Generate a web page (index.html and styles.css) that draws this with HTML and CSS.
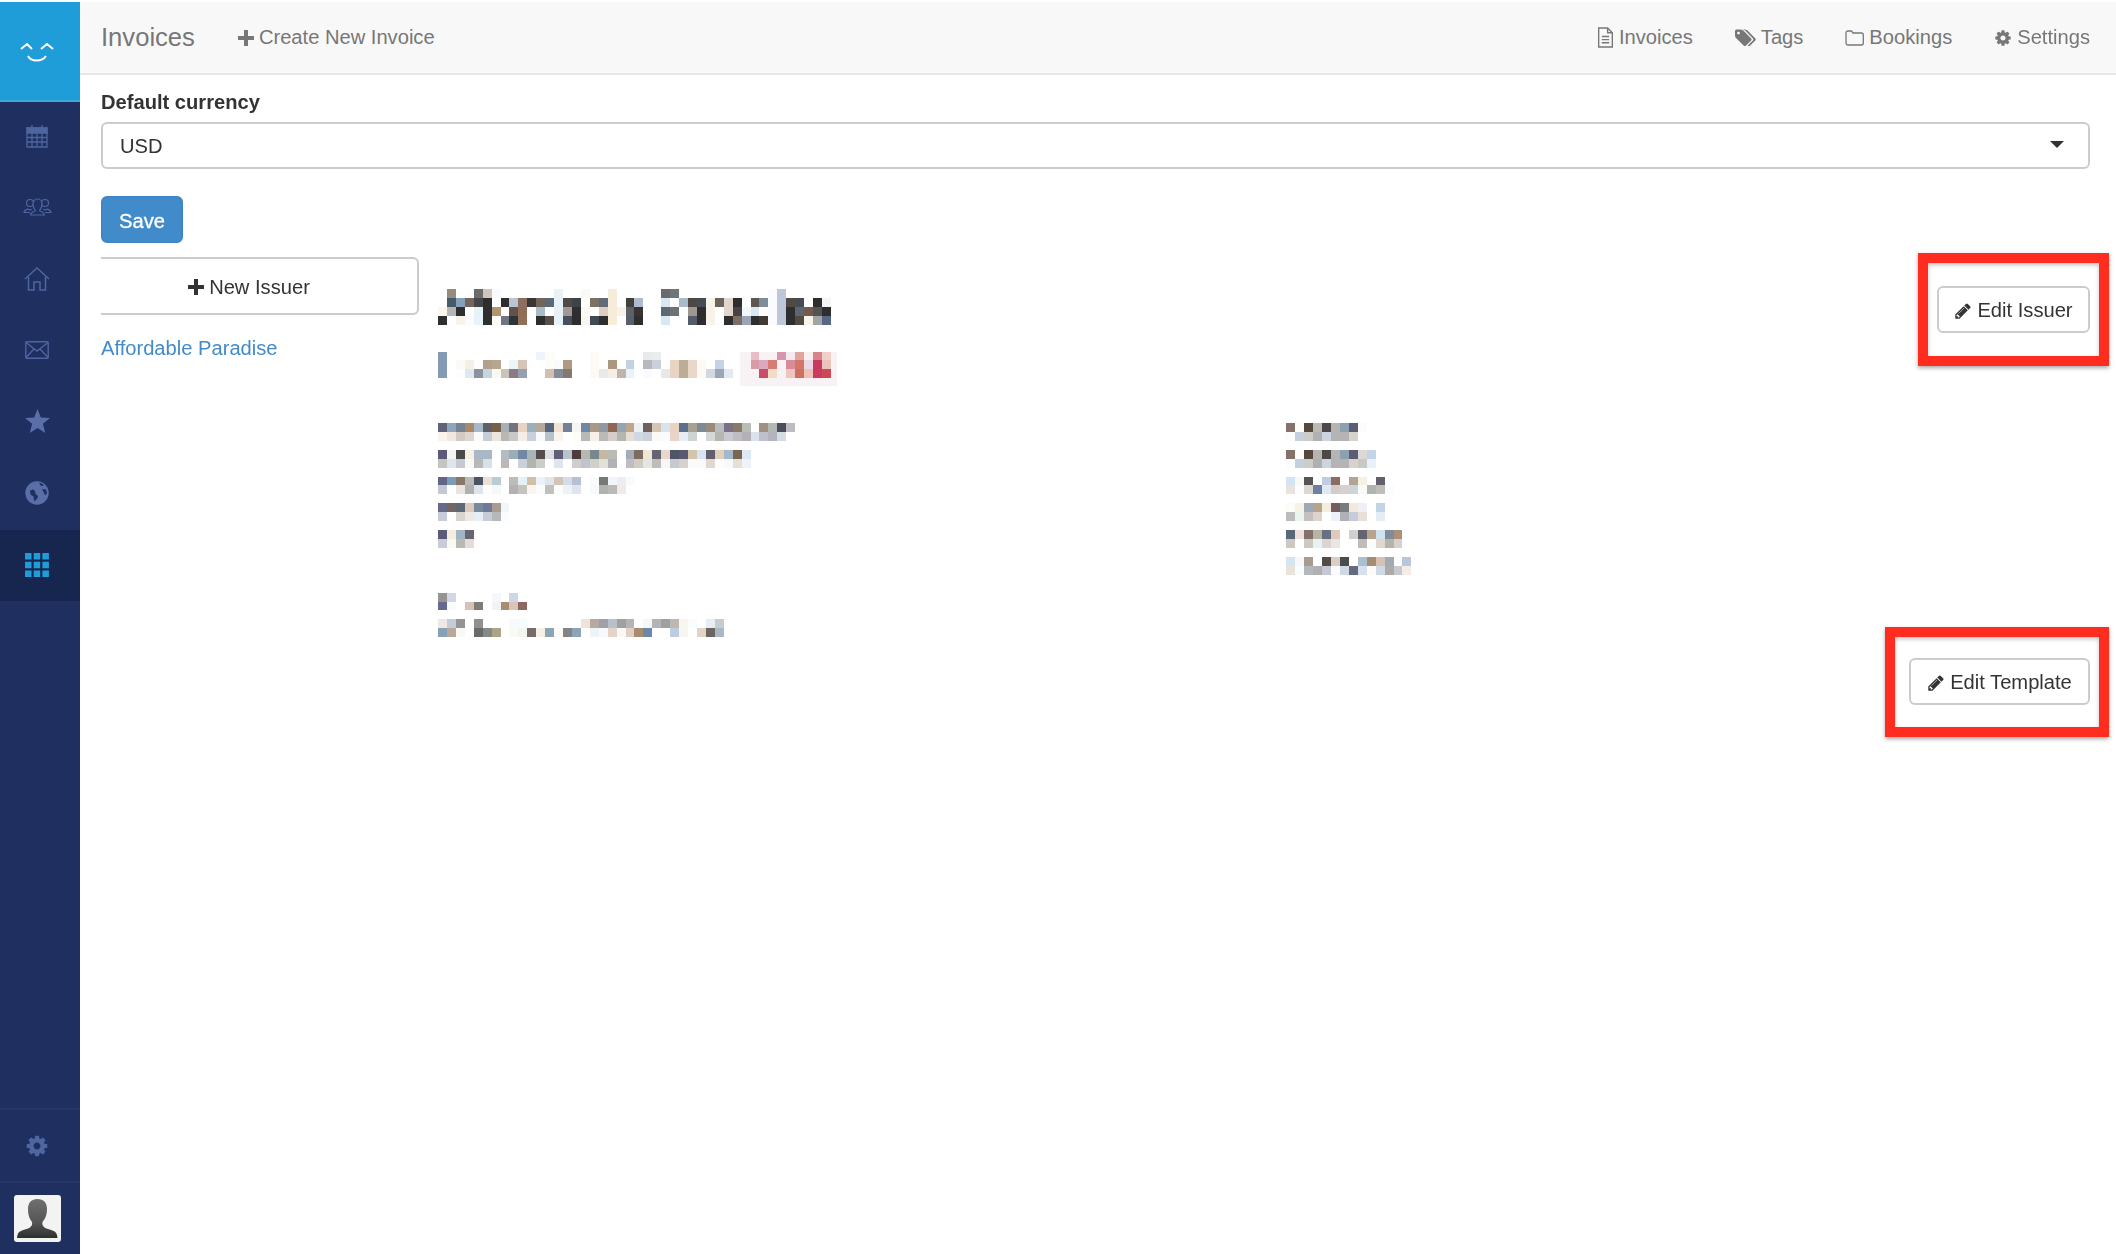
FILE: index.html
```html
<!DOCTYPE html>
<html lang="en">
<head>
<meta charset="utf-8">
<title>Invoices</title>
<link rel="stylesheet" href="styles.css">
</head>
<body>
<div class="app">
  <aside class="sidebar">
    <a class="logo">
      <svg width="34" height="22" viewBox="0 0 34 22" fill="none" stroke="#fff" stroke-width="2"><path d="M1 7l6-5 5 5M21 7l6-5 6 5"/><path d="M8 14c3 6 14 6 18 0"/></svg>
    </a>
    <nav class="side-nav">
      <a class="side-item">
        <svg width="22" height="24" viewBox="0 0 22 24" fill="none" stroke="#4f65a0" stroke-width="1.3"><path d="M1 4h20v19H1z"/><path d="M1 4h20v5H1z" fill="#4f65a0"/><path d="M1 13.5h20M1 18h20M6 9v14M11 9v14M16 9v14M6 1v4M16 1v4"/></svg>
      </a>
      <a class="side-item">
        <svg width="29" height="18" viewBox="0 0 29 18" fill="none" stroke="#4f65a0" stroke-width="1.2"><path d="M9 11.5c-2 .6-4-.2-4.500-.5-1.500 1-3.500 1.500-3.500 3.500h6"/><circle cx="7" cy="5" r="3.500"/><path d="M20 11.500c2 .6 4-.2 4.500-.5 1.500 1 3.500 1.500 3.500 3.500h-6"/><circle cx="22" cy="5" r="3.500"/><path d="M7.500 17c0-3 4-3 5-4.500-2-2.500-2.500-4-2.500-6.500 0-3 2-5 4.500-5S19 3 19 6c0 2.500-.5 4-2.500 6.500 1 1.500 5 1.500 5 4.500z" fill="#1e2f60"/></svg>
      </a>
      <a class="side-item">
        <svg width="26" height="24" viewBox="0 0 26 24" fill="none" stroke="#4f65a0" stroke-width="1.5"><path d="M1 12L13 1l12 11"/><path d="M4.500 10v13H10v-8h6v8h5.500V10"/></svg>
      </a>
      <a class="side-item">
        <svg width="24" height="18" viewBox="0 0 24 18" fill="none" stroke="#4f65a0" stroke-width="1.4"><rect x=".8" y=".8" width="22.400" height="16.400" rx="1"/><path d="M1 1.500l11 8.500 11-8.500M1 16.500l8-8.500M23 16.500L15 8"/></svg>
      </a>
      <a class="side-item">
        <svg width="25" height="24" viewBox="0 0 25 24"><path fill="#5a6fa8" d="M12.500 0l3.300 8.400 9.200.6-7.100 5.800 2.300 9.200-7.700-5-7.700 5 2.300-9.200L0 9l9.200-.6z"/></svg>
      </a>
      <a class="side-item">
        <svg width="24" height="24" viewBox="0 0 24 24"><circle cx="12" cy="12" r="11.700" fill="#5a6fa8"/><path fill="#1e2f60" d="M5 9.500l3-1 2 1.500.5 3 2.500 2-.5 2-2.500 3-1-.5-.5-4-3-2zM14 1.800l3 .7 2 2-3 .5zM17 8l4 .5 1 3.500-1.500 2.500L19 12z"/></svg>
      </a>
      <a class="side-item active">
        <svg width="24" height="24" viewBox="0 0 24 24" fill="#1f9dd9"><path d="M0 0h6.500v6.500H0zM8.700 0h6.500v6.500H8.700zM17.400 0h6.500v6.500h-6.500zM0 8.700h6.500v6.500H0zM8.700 8.700h6.500v6.500H8.700zM17.400 8.700h6.500v6.500h-6.500zM0 17.400h6.500v6.500H0zM8.700 17.400h6.500v6.500H8.700zM17.400 17.400h6.500v6.500h-6.500z"/></svg>
      </a>
    </nav>
    <div class="side-foot">
      <a class="side-gear">
        <svg width="24" height="24" viewBox="0 0 1792 1792"><path fill="#4f65a0" d="M1152 896q0-106-75-181t-181-75-181 75-75 181 75 181 181 75 181-75 75-181zm512-109v222q0 12-8 23t-20 13l-185 28q-19 54-39 91 35 50 107 138 10 12 10 25t-9 23q-27 37-99 108t-94 71q-12 0-26-9l-138-108q-44 23-91 38-16 136-29 186-7 28-36 28h-222q-14 0-24.500-8.500t-11.500-21.500l-28-184q-49-16-90-37l-141 107q-10 9-25 9-14 0-25-11-126-114-165-168-7-10-7-23 0-12 8-23 15-21 51-66.500t54-70.500q-27-50-41-99l-183-27q-13-2-21-12.500t-8-23.500v-222q0-12 8-23t19-13l186-28q14-46 39-92-40-57-107-138-10-12-10-24 0-10 9-23 26-36 98.500-107.500t94.500-71.500q13 0 26 10l138 107q44-23 91-38 16-136 29-186 7-28 36-28h222q14 0 24.500 8.500t11.500 21.500l28 184q49 16 90 37l142-107q9-9 24-9 13 0 25 10 129 119 165 170 7 8 7 22 0 12-8 23-15 21-51 66.500t-54 70.500q26 50 41 98l183 28q13 2 21 12.500t8 23.500z"/></svg>
      </a>
      <div class="side-user">
        <svg class="avatar" width="47" height="47" viewBox="0 0 47 47">
          <defs><linearGradient id="sil" x1="0" y1="0" x2="0" y2="1"><stop offset="0" stop-color="#707070"/><stop offset=".6" stop-color="#555"/><stop offset="1" stop-color="#2f2f2f"/></linearGradient></defs>
          <rect width="47" height="47" rx="3" fill="#f3f3f3"/>
          <path fill="url(#sil)" d="M23.500 4c6 0 9.500 3.500 9.500 10 0 6-2 10-4.500 13-.5 3 .5 5 4 6.500 4 1.500 9.500 2 10.500 6.500l.5 3H3l.5-3c1-4.500 6.500-5 10.500-6.500 3.500-1.500 4.500-3.500 4-6.500C15.500 24 14 20 14 14c0-6.500 3.500-10 9.500-10z"/>
        </svg>
      </div>
    </div>
  </aside>

  <main class="main">
    <header class="topbar">
      <span class="brand">Invoices</span>
      <a class="nav-link create">
        <svg class="ic" width="16" height="16" viewBox="0 0 16 16" fill="#777"><path d="M6 0h4v6h6v4h-6v6H6v-6H0V6h6z"/></svg>
        Create New Invoice
      </a>
      <div class="topbar-right">
        <a class="nav-link">
          <svg class="ic" width="17" height="21" viewBox="0 0 15 20" fill="none" stroke="#777" stroke-width="1.300"><path d="M1 1h8.500L14 5.500V19H1z"/><path d="M9.500 1v4.500H14M4 9h7M4 12h7M4 15h7"/></svg>
          Invoices
        </a>
        <a class="nav-link">
          <svg class="ic" width="21" height="20" viewBox="0 0 1920 1792"><path fill="#777" d="M448 448q0-53-37.500-90.500t-90.500-37.500-90.500 37.500-37.500 90.500 37.500 90.500 90.500 37.500 90.500-37.500 37.500-90.500zm1067 576q0 53-37 90l-491 492q-39 37-91 37-53 0-90-37l-715-716q-38-37-64.500-101t-26.500-117v-416q0-52 38-90t90-38h416q53 0 117 26.500t102 64.500l715 714q37 39 37 91zm384 0q0 53-37 90l-491 492q-39 37-91 37-36 0-59-14t-53-45l470-470q37-37 37-90 0-52-37-91l-715-714q-38-38-102-64.500t-117-26.500h224q53 0 117 26.500t102 64.500l715 714q37 39 37 91z"/></svg>
          Tags
        </a>
        <a class="nav-link">
          <svg class="ic" width="19" height="16" viewBox="0 0 19 16" fill="none" stroke="#777" stroke-width="1.300"><path d="M1 3c0-1 .6-2 2-2h3.500L8 3h8.500c1 0 1.800.7 1.800 2v8c0 1.300-.8 2-1.800 2H3c-1.400 0-2-1-2-2z"/></svg>
          Bookings
        </a>
        <a class="nav-link">
          <svg class="ic" width="18" height="18" viewBox="0 0 1792 1792"><path fill="#777" d="M1152 896q0-106-75-181t-181-75-181 75-75 181 75 181 181 75 181-75 75-181zm512-109v222q0 12-8 23t-20 13l-185 28q-19 54-39 91 35 50 107 138 10 12 10 25t-9 23q-27 37-99 108t-94 71q-12 0-26-9l-138-108q-44 23-91 38-16 136-29 186-7 28-36 28h-222q-14 0-24.500-8.500t-11.500-21.500l-28-184q-49-16-90-37l-141 107q-10 9-25 9-14 0-25-11-126-114-165-168-7-10-7-23 0-12 8-23 15-21 51-66.500t54-70.500q-27-50-41-99l-183-27q-13-2-21-12.500t-8-23.500v-222q0-12 8-23t19-13l186-28q14-46 39-92-40-57-107-138-10-12-10-24 0-10 9-23 26-36 98.500-107.500t94.500-71.500q13 0 26 10l138 107q44-23 91-38 16-136 29-186 7-28 36-28h222q14 0 24.500 8.500t11.500 21.500l28 184q49 16 90 37l142-107q9-9 24-9 13 0 25 10 129 119 165 170 7 8 7 22 0 12-8 23-15 21-51 66.500t-54 70.500q26 50 41 98l183 28q13 2 21 12.500t8 23.500z"/></svg>
          Settings
        </a>
      </div>
    </header>

    <section class="content">
      <label class="field-label">Default currency</label>
      <div class="select"><span>USD</span><i class="caret"></i></div>
      <button class="btn-save">Save</button>

      <div class="issuers">
        <div class="issuer-list">
          <a class="btn-new">
            <svg class="ic" width="16" height="16" viewBox="0 0 16 16" fill="#333"><path d="M6 0h4v6h6v4h-6v6H6v-6H0V6h6z"/></svg>
            New Issuer
          </a>
          <a class="issuer-link">Affordable Paradise</a>
        </div>
        <div class="issuer-pane">
          <div class="issuer-head">
            <svg class="mosaic" viewBox="0 0 109 39" role="img" aria-label="Obscured issuer details">
              <g transform="translate(0,0)"><rect x="1" fill="#978a7f"/><rect x="4" fill="#6b6b6b"/><rect x="5" fill="#cfc5bc"/><rect x="6" fill="#f8fafd"/><rect x="13" fill="#e6f2f8"/><rect x="16" fill="#fcf8f4"/><rect x="19" fill="#f7ebd9"/><rect x="25" fill="#6b6b6b"/><rect x="26" fill="#707676"/><rect x="37" fill="#f9fbfe"/><rect x="38" fill="#bcc7d9"/></g>
              <g transform="translate(0,1)"><rect x="1" fill="#465a6a"/><rect x="2" fill="#85a0bb"/><rect x="3" fill="#76655c"/><rect x="4" fill="#454648"/><rect x="5" fill="#2e2e2e"/><rect x="7" fill="#2e2e2e"/><rect x="8" fill="#b9c5d2"/><rect x="9" fill="#8e6e60"/><rect x="10" fill="#3a3835"/><rect x="11" fill="#74655b"/><rect x="12" fill="#5a6a78"/><rect x="13" fill="#e6f2f8"/><rect x="14" fill="#4e4a46"/><rect x="15" fill="#3e4349"/><rect x="17" fill="#7d7164"/><rect x="18" fill="#5f6b78"/><rect x="19" fill="#f7ebd9"/><rect x="21" fill="#433f3b"/><rect x="22" fill="#b0bccd"/><rect x="25" fill="#d8e8f2"/><rect x="27" fill="#a9bbc8"/><rect x="28" fill="#4d4845"/><rect x="29" fill="#454c54"/><rect x="30" fill="#f7f3e8"/><rect x="31" fill="#6e635a"/><rect x="32" fill="#e2d6cc"/><rect x="33" fill="#2e2e2e"/><rect x="35" fill="#5f5650"/><rect x="36" fill="#7f8c9a"/><rect x="37" fill="#f9fbfe"/><rect x="38" fill="#bcc7d9"/><rect x="39" fill="#4f4a47"/><rect x="40" fill="#454b54"/><rect x="42" fill="#2e2e2e"/><rect x="43" fill="#f2f6f9"/></g>
              <g transform="translate(0,2)"><rect x="0" fill="#fcf7ed"/><rect x="1" fill="#b5b5b8"/><rect x="2" fill="#2e2e2e"/><rect x="4" fill="#e6f3f8"/><rect x="5" fill="#2e2e2e"/><rect x="6" fill="#ad9671"/><rect x="8" fill="#62524a"/><rect x="9" fill="#8f6e58"/><rect x="11" fill="#a8bdc9"/><rect x="13" fill="#e6f2f8"/><rect x="14" fill="#a29a90"/><rect x="15" fill="#2f2f2f"/><rect x="16" fill="#fcf8f4"/><rect x="18" fill="#e0cdbe"/><rect x="19" fill="#f7ebd9"/><rect x="20" fill="#f9f2e6"/><rect x="21" fill="#5c6168"/><rect x="22" fill="#383434"/><rect x="25" fill="#5e6870"/><rect x="26" fill="#6e7272"/><rect x="28" fill="#9e9890"/><rect x="29" fill="#2e2e2e"/><rect x="30" fill="#f7f3e8"/><rect x="32" fill="#e2d6cc"/><rect x="33" fill="#464442"/><rect x="34" fill="#f3f6fa"/><rect x="35" fill="#d8e8f2"/><rect x="37" fill="#f9fbfe"/><rect x="38" fill="#bcc7d9"/><rect x="39" fill="#2e2e2e"/><rect x="40" fill="#5f6570"/><rect x="41" fill="#725a4e"/><rect x="42" fill="#53534f"/><rect x="43" fill="#2e2e2e"/></g>
              <g transform="translate(0,3)"><rect x="0" fill="#2e2e2e"/><rect x="2" fill="#f7f3e8"/><rect x="3" fill="#fbfcfe"/><rect x="4" fill="#e6f3f8"/><rect x="5" fill="#2e2e2e"/><rect x="6" fill="#fdfcf8"/><rect x="7" fill="#6f7683"/><rect x="8" fill="#303236"/><rect x="9" fill="#906e58"/><rect x="11" fill="#2e2e2e"/><rect x="12" fill="#584f47"/><rect x="13" fill="#e6f2f8"/><rect x="14" fill="#46505c"/><rect x="15" fill="#2e2e2e"/><rect x="16" fill="#f9f6f2"/><rect x="17" fill="#434952"/><rect x="18" fill="#2e2e2e"/><rect x="19" fill="#f7ebd9"/><rect x="21" fill="#55606a"/><rect x="22" fill="#2e2e2e"/><rect x="25" fill="#d8e8f2"/><rect x="28" fill="#535c68"/><rect x="29" fill="#2e2e2e"/><rect x="30" fill="#f7f3e8"/><rect x="32" fill="#2e2e2e"/><rect x="33" fill="#7b6e66"/><rect x="34" fill="#9ba5b5"/><rect x="35" fill="#2e2e2e"/><rect x="36" fill="#413a33"/><rect x="37" fill="#f9fbfe"/><rect x="38" fill="#bcc7d9"/><rect x="39" fill="#2e2e2e"/><rect x="40" fill="#4f4a42"/><rect x="41" fill="#f9f4e9"/><rect x="42" fill="#a0a4a6"/><rect x="43" fill="#566684"/></g>

              <rect class="pink-bg" x="33.800" y="7" fill="#f8f2f5"/>
              <g transform="translate(0,7)"><rect x="0" fill="#8499b3"/><rect x="11" fill="#eef4f9"/><rect x="12" fill="#fdfcf8"/><rect x="17" fill="#fdf9f5"/><rect x="23" fill="#e8e9ea"/><rect x="24" fill="#ececee"/><rect x="35" fill="#e8bec6"/><rect x="38" fill="#d595ae"/><rect x="39" fill="#f3e9f1"/><rect x="40" fill="#e2a39c"/><rect x="41" fill="#f9eff0"/><rect x="42" fill="#d5848f"/><rect x="43" fill="#efcfc8"/></g>
              <g transform="translate(0,8)"><rect x="0" fill="#8499b3"/><rect x="2" fill="#fafaf6"/><rect x="3" fill="#f6efe5"/><rect x="4" fill="#fdfdfb"/><rect x="5" fill="#b3a08d"/><rect x="6" fill="#b7a58f"/><rect x="8" fill="#edf5f8"/><rect x="9" fill="#d6c4b6"/><rect x="12" fill="#fdfcf8"/><rect x="13" fill="#f8fafb"/><rect x="14" fill="#b09883"/><rect x="17" fill="#fdf9f5"/><rect x="19" fill="#ac9780"/><rect x="21" fill="#c2d2e4"/><rect x="23" fill="#b8b8bc"/><rect x="24" fill="#cacfdc"/><rect x="26" fill="#e9d4c4"/><rect x="27" fill="#bcae96"/><rect x="28" fill="#e9d8c9"/><rect x="29" fill="#fdfaf6"/><rect x="31" fill="#c4d3e6"/><rect x="35" fill="#da9ba8"/><rect x="36" fill="#dba9bd"/><rect x="37" fill="#d87b72"/><rect x="38" fill="#fbf2f6"/><rect x="39" fill="#d98b9a"/><rect x="40" fill="#d37668"/><rect x="41" fill="#ead9e6"/><rect x="42" fill="#c9395f"/><rect x="43" fill="#ecc3b8"/></g>
              <g transform="translate(0,9)"><rect x="0" fill="#8499b3"/><rect x="2" fill="#fdfdfe"/><rect x="3" fill="#dce9f1"/><rect x="4" fill="#8a929c"/><rect x="5" fill="#c4d4e1"/><rect x="6" fill="#faf8f3"/><rect x="7" fill="#c9c4b8"/><rect x="8" fill="#887c82"/><rect x="9" fill="#96a0b4"/><rect x="12" fill="#d2bfae"/><rect x="13" fill="#828c9a"/><rect x="14" fill="#84796f"/><rect x="17" fill="#fdf9f5"/><rect x="18" fill="#e9e9e8"/><rect x="19" fill="#f6eee6"/><rect x="20" fill="#bfb4a9"/><rect x="21" fill="#e8f2f9"/><rect x="23" fill="#f9fbfd"/><rect x="25" fill="#e8e8e8"/><rect x="26" fill="#e9d4c4"/><rect x="27" fill="#bcae96"/><rect x="28" fill="#e9d8c9"/><rect x="29" fill="#fdfaf6"/><rect x="30" fill="#d2d7e0"/><rect x="31" fill="#9aa5b6"/><rect x="32" fill="#e4e9f1"/><rect x="36" fill="#c94d68"/><rect x="37" fill="#f1dcc8"/><rect x="39" fill="#eec5be"/><rect x="40" fill="#cf6f60"/><rect x="41" fill="#eec2b8"/><rect x="42" fill="#cb3b60"/><rect x="43" fill="#cc4a58"/></g>

              <g transform="translate(0,15)"><rect x="0" fill="#60627c"/><rect x="1" fill="#8fa6ba"/><rect x="2" fill="#768491"/><rect x="3" fill="#a98a68"/><rect x="4" fill="#a5b8cc"/><rect x="5" fill="#5f6065"/><rect x="6" fill="#775f4a"/><rect x="7" fill="#a7afb7"/><rect x="8" fill="#74727c"/><rect x="9" fill="#e8d2c2"/><rect x="10" fill="#9ab0be"/><rect x="11" fill="#b7a999"/><rect x="12" fill="#55677a"/><rect x="13" fill="#f3e2d4"/><rect x="14" fill="#767f99"/><rect x="15" fill="#f5f5f3"/><rect x="16" fill="#6f88a8"/><rect x="17" fill="#a89885"/><rect x="18" fill="#8f99a6"/><rect x="19" fill="#8f6654"/><rect x="20" fill="#96a3b3"/><rect x="21" fill="#bda68a"/><rect x="22" fill="#edf0f1"/><rect x="23" fill="#6e5f5e"/><rect x="24" fill="#d6c6b1"/><rect x="25" fill="#d6e4f0"/><rect x="26" fill="#e8d2c0"/><rect x="27" fill="#5e7089"/><rect x="28" fill="#a8a094"/><rect x="29" fill="#7e8a96"/><rect x="30" fill="#9a8a78"/><rect x="31" fill="#b8bcbe"/><rect x="32" fill="#7e7084"/><rect x="33" fill="#877b68"/><rect x="34" fill="#b8bdb6"/><rect x="36" fill="#a0907e"/><rect x="37" fill="#b4b8b4"/><rect x="38" fill="#4b4d5c"/><rect x="39" fill="#bcbdc0"/></g>
              <g transform="translate(0,16)"><rect x="0" fill="#fbf2ea"/><rect x="1" fill="#f1e7e1"/><rect x="2" fill="#d2cac5"/><rect x="3" fill="#dfd6cf"/><rect x="4" fill="#fafbfd"/><rect x="5" fill="#c8ced8"/><rect x="6" fill="#ede6df"/><rect x="7" fill="#b9b8b2"/><rect x="8" fill="#c8c8c8"/><rect x="9" fill="#f7ece6"/><rect x="10" fill="#c8d0de"/><rect x="11" fill="#fafafa"/><rect x="12" fill="#b6c4ca"/><rect x="13" fill="#faf3ee"/><rect x="15" fill="#fdfdf8"/><rect x="16" fill="#b8b8b8"/><rect x="17" fill="#f7efe8"/><rect x="18" fill="#bcbab6"/><rect x="19" fill="#d8ccc8"/><rect x="20" fill="#b4b6b0"/><rect x="21" fill="#e8ded6"/><rect x="22" fill="#d0d8e2"/><rect x="23" fill="#ccd0da"/><rect x="24" fill="#fcfaf6"/><rect x="25" fill="#fbfbfb"/><rect x="26" fill="#e8d4c8"/><rect x="27" fill="#e8ecf4"/><rect x="28" fill="#ced3d4"/><rect x="30" fill="#d4d8d6"/><rect x="31" fill="#b4b6b0"/><rect x="32" fill="#ccc8d0"/><rect x="33" fill="#c0bcc4"/><rect x="34" fill="#b4b0b8"/><rect x="35" fill="#dce2ec"/><rect x="36" fill="#c0c0cc"/><rect x="37" fill="#b4b4bc"/><rect x="38" fill="#d4dce6"/></g>
              <g transform="translate(0,18)"><rect x="0" fill="#5a5a78"/><rect x="1" fill="#f4f4f0"/><rect x="2" fill="#4a4a4a"/><rect x="3" fill="#f4f0e4"/><rect x="4" fill="#a8b8c8"/><rect x="5" fill="#a8b8c4"/><rect x="7" fill="#b4bcc0"/><rect x="8" fill="#9cacb8"/><rect x="9" fill="#7088a4"/><rect x="10" fill="#a8b4b8"/><rect x="11" fill="#544c4c"/><rect x="12" fill="#dcdee6"/><rect x="13" fill="#606078"/><rect x="14" fill="#b8c4cc"/><rect x="15" fill="#4c3c3c"/><rect x="16" fill="#b8b8b0"/><rect x="17" fill="#788690"/><rect x="18" fill="#c4b8a4"/><rect x="19" fill="#b8bcb4"/><rect x="21" fill="#a4aeb8"/><rect x="22" fill="#7e6c60"/><rect x="23" fill="#f0e6d4"/><rect x="24" fill="#666470"/><rect x="25" fill="#e8d8cc"/><rect x="26" fill="#505468"/><rect x="27" fill="#585870"/><rect x="28" fill="#d4c4ac"/><rect x="29" fill="#d8e4f2"/><rect x="30" fill="#62606c"/><rect x="31" fill="#e0d0bc"/><rect x="32" fill="#a4b8cc"/><rect x="33" fill="#7a6650"/><rect x="34" fill="#dce8f4"/></g>
              <g transform="translate(0,19)"><rect x="0" fill="#c4c4c0"/><rect x="1" fill="#e0e4ec"/><rect x="2" fill="#c8c8d0"/><rect x="3" fill="#f8f8f4"/><rect x="4" fill="#b8b8b8"/><rect x="5" fill="#d8e0e8"/><rect x="7" fill="#bcb8b8"/><rect x="9" fill="#ccd0d8"/><rect x="10" fill="#b4b4ae"/><rect x="11" fill="#ccccc8"/><rect x="13" fill="#e0e4ee"/><rect x="15" fill="#d0cecc"/><rect x="16" fill="#c0c2cc"/><rect x="17" fill="#d0d0ca"/><rect x="18" fill="#e4e0d8"/><rect x="19" fill="#b4b0b8"/><rect x="21" fill="#c0bcc0"/><rect x="22" fill="#d0ccc4"/><rect x="23" fill="#e4e6e6"/><rect x="24" fill="#c0bcb8"/><rect x="25" fill="#f6f8f6"/><rect x="26" fill="#c8c8d0"/><rect x="27" fill="#d8d0cc"/><rect x="28" fill="#fbfaf8"/><rect x="29" fill="#fafafa"/><rect x="30" fill="#e0d8d0"/><rect x="31" fill="#fdfdfc"/><rect x="32" fill="#f8f9fa"/><rect x="33" fill="#e4e0d8"/><rect x="34" fill="#ecf4f9"/></g>
              <g transform="translate(0,21)"><rect x="0" fill="#626488"/><rect x="1" fill="#7a9cb8"/><rect x="2" fill="#887868"/><rect x="3" fill="#b8bcb8"/><rect x="4" fill="#4c5462"/><rect x="5" fill="#ece0d4"/><rect x="6" fill="#b8ccd8"/><rect x="8" fill="#bcbcb8"/><rect x="9" fill="#e4f2f8"/><rect x="10" fill="#d0c0a8"/><rect x="11" fill="#ecf2f8"/><rect x="12" fill="#e0e6ea"/><rect x="13" fill="#d4c4b8"/><rect x="14" fill="#d4dce8"/><rect x="15" fill="#b8c0d4"/><rect x="17" fill="#f8fafd"/><rect x="18" fill="#787874"/><rect x="19" fill="#f0f6fa"/><rect x="20" fill="#eeeef0"/><rect x="21" fill="#f8fbfd"/></g>
              <g transform="translate(0,22)"><rect x="0" fill="#c4c8d4"/><rect x="2" fill="#ece4e0"/><rect x="3" fill="#b0b0b0"/><rect x="4" fill="#dce4ee"/><rect x="5" fill="#fdfdfb"/><rect x="6" fill="#f4f8f8"/><rect x="8" fill="#b4b0b4"/><rect x="9" fill="#c4c4bc"/><rect x="10" fill="#f8f4ee"/><rect x="11" fill="#fafbfb"/><rect x="12" fill="#c0c0bc"/><rect x="13" fill="#fbfcfc"/><rect x="14" fill="#eef2f6"/><rect x="15" fill="#e0e4f0"/><rect x="17" fill="#f8f9fc"/><rect x="18" fill="#b0b2ae"/><rect x="19" fill="#bcb8b8"/><rect x="20" fill="#f0ebe8"/></g>
              <g transform="translate(0,24)"><rect x="0" fill="#666a88"/><rect x="1" fill="#766660"/><rect x="2" fill="#5c6a78"/><rect x="3" fill="#dcc8bc"/><rect x="4" fill="#768a9c"/><rect x="5" fill="#72789a"/><rect x="6" fill="#a89c90"/><rect x="7" fill="#f0f6fa"/></g>
              <g transform="translate(0,25)"><rect x="0" fill="#c8ccd8"/><rect x="2" fill="#d8d4d0"/><rect x="3" fill="#f0e8e4"/><rect x="4" fill="#e8eef6"/><rect x="5" fill="#c8ccd8"/><rect x="6" fill="#b4b8ba"/><rect x="7" fill="#f9fbfc"/></g>
              <g transform="translate(0,27)"><rect x="0" fill="#5c5a78"/><rect x="1" fill="#f4ecdc"/><rect x="2" fill="#a0b4c4"/><rect x="3" fill="#686470"/></g>
              <g transform="translate(0,28)"><rect x="0" fill="#c8ccd8"/><rect x="1" fill="#f8f8f4"/><rect x="2" fill="#b8b8b4"/><rect x="3" fill="#e4dcd8"/></g>
              <g transform="translate(0,34)"><rect x="0" fill="#989494"/><rect x="1" fill="#d0d8e8"/><rect x="6" fill="#f4f8fa"/><rect x="8" fill="#ccd8e4"/></g>
              <g transform="translate(0,35)"><rect x="0" fill="#666a90"/><rect x="1" fill="#fafbfd"/><rect x="3" fill="#d8c0b8"/><rect x="4" fill="#7c7c78"/><rect x="6" fill="#f2f4f4"/><rect x="7" fill="#a88c74"/><rect x="8" fill="#d8c4b8"/><rect x="9" fill="#8c6860"/></g>
              <g transform="translate(0,37)"><rect x="0" fill="#f0e8e4"/><rect x="1" fill="#c4ccd8"/><rect x="2" fill="#949494"/><rect x="4" fill="#909090"/><rect x="8" fill="#f6fafd"/><rect x="9" fill="#f6fbfc"/><rect x="16" fill="#f0e4d8"/><rect x="17" fill="#b8a8a0"/><rect x="18" fill="#a0a0a8"/><rect x="19" fill="#b8c0cc"/><rect x="20" fill="#a0a0a0"/><rect x="21" fill="#b4b4b4"/><rect x="23" fill="#f4f8fa"/><rect x="24" fill="#b4b4b8"/><rect x="25" fill="#a0a0a0"/><rect x="26" fill="#c0b8b0"/><rect x="27" fill="#f8f6f0"/><rect x="28" fill="#fbfcfd"/><rect x="30" fill="#e8ecf4"/><rect x="31" fill="#c4ccd0"/></g>
              <g transform="translate(0,38)"><rect x="0" fill="#88a0b4"/><rect x="1" fill="#b8a89c"/><rect x="2" fill="#f8f8f4"/><rect x="4" fill="#686c68"/><rect x="5" fill="#848a88"/><rect x="6" fill="#aca488"/><rect x="8" fill="#fafaf4"/><rect x="9" fill="#f4f4f2"/><rect x="10" fill="#786c68"/><rect x="11" fill="#f4f0e4"/><rect x="12" fill="#8ca4b4"/><rect x="13" fill="#fcfbf8"/><rect x="14" fill="#848484"/><rect x="15" fill="#8ca4b8"/><rect x="17" fill="#ecf4f8"/><rect x="18" fill="#f8f9fa"/><rect x="19" fill="#e4d4c8"/><rect x="20" fill="#f8f8f6"/><rect x="21" fill="#e0d0c4"/><rect x="22" fill="#a88c70"/><rect x="23" fill="#6c88a8"/><rect x="26" fill="#bccde0"/><rect x="27" fill="#f8f6f0"/><rect x="29" fill="#e0d4c4"/><rect x="30" fill="#6e6462"/><rect x="31" fill="#a8b8c4"/></g>

              <g transform="translate(95,15)"><rect x="0" fill="#85706a"/><rect x="1" fill="#fdfcf8"/><rect x="2" fill="#56483c"/><rect x="3" fill="#bcbab6"/><rect x="4" fill="#4c4848"/><rect x="5" fill="#b4b4b4"/><rect x="6" fill="#8ca0b0"/><rect x="7" fill="#5c5c74"/><rect x="8" fill="#fbfbfb"/></g>
              <g transform="translate(95,16)"><rect x="0" fill="#fafcfd"/><rect x="1" fill="#c4d0dc"/><rect x="2" fill="#ccccc8"/><rect x="3" fill="#b0b0b4"/><rect x="4" fill="#ccd4e0"/><rect x="5" fill="#b4b4b4"/><rect x="6" fill="#b4b4b4"/><rect x="7" fill="#d8d2cc"/></g>
              <g transform="translate(95,18)"><rect x="0" fill="#85706a"/><rect x="1" fill="#fdfcf8"/><rect x="2" fill="#56483c"/><rect x="3" fill="#b4b4b0"/><rect x="4" fill="#4c4848"/><rect x="5" fill="#b4b4b4"/><rect x="6" fill="#8ca0b0"/><rect x="7" fill="#5c5c74"/><rect x="8" fill="#dcd8d4"/><rect x="9" fill="#c4d4e8"/></g>
              <g transform="translate(95,19)"><rect x="0" fill="#fafcfd"/><rect x="1" fill="#c4d0dc"/><rect x="2" fill="#ccccc8"/><rect x="3" fill="#b0b0b4"/><rect x="4" fill="#ccd4e0"/><rect x="5" fill="#b4b4b4"/><rect x="6" fill="#b4b4b4"/><rect x="7" fill="#d8d2cc"/><rect x="8" fill="#c8c8c4"/><rect x="9" fill="#e8f0f8"/></g>
              <g transform="translate(95,21)"><rect x="0" fill="#d4e4f4"/><rect x="1" fill="#f8f8f8"/><rect x="2" fill="#545454"/><rect x="4" fill="#c0cce0"/><rect x="5" fill="#8c6c60"/><rect x="7" fill="#b0a494"/><rect x="8" fill="#f4f2e4"/><rect x="10" fill="#62606c"/></g>
              <g transform="translate(95,22)"><rect x="0" fill="#e8e4dc"/><rect x="1" fill="#fbfcfd"/><rect x="2" fill="#dcd8d0"/><rect x="3" fill="#6c80a4"/><rect x="4" fill="#e0e8f2"/><rect x="5" fill="#d4ccc8"/><rect x="6" fill="#d8d0cc"/><rect x="7" fill="#ccd4d8"/><rect x="8" fill="#fafaf4"/><rect x="9" fill="#b0b4b0"/><rect x="10" fill="#c0bcb8"/><rect x="11" fill="#fbfcfd"/></g>
              <g transform="translate(95,24)"><rect x="0" fill="#fefcf8"/><rect x="1" fill="#f6f2e4"/><rect x="2" fill="#9caab8"/><rect x="3" fill="#b8a48c"/><rect x="4" fill="#f4ecdc"/><rect x="5" fill="#745c60"/><rect x="6" fill="#787c7c"/><rect x="7" fill="#f4e8dc"/><rect x="8" fill="#eef0f6"/><rect x="10" fill="#c4d4e8"/></g>
              <g transform="translate(95,25)"><rect x="0" fill="#bcbcbc"/><rect x="1" fill="#ecf4f0"/><rect x="2" fill="#c4c0c0"/><rect x="3" fill="#dcd4cc"/><rect x="5" fill="#ecf0f8"/><rect x="6" fill="#b0b0b8"/><rect x="7" fill="#c4ccdc"/><rect x="8" fill="#e8e0d8"/><rect x="10" fill="#e4ecf6"/></g>
              <g transform="translate(95,27)"><rect x="0" fill="#586878"/><rect x="1" fill="#ece0dc"/><rect x="2" fill="#847068"/><rect x="3" fill="#b8b4a4"/><rect x="4" fill="#687084"/><rect x="5" fill="#dccabc"/><rect x="7" fill="#d0d0d0"/><rect x="8" fill="#646470"/><rect x="9" fill="#b8a48c"/><rect x="10" fill="#d0e2f0"/><rect x="11" fill="#808c9c"/><rect x="12" fill="#ac9078"/></g>
              <g transform="translate(95,28)"><rect x="0" fill="#ccc8c4"/><rect x="2" fill="#ccc8c4"/><rect x="3" fill="#e8f2f6"/><rect x="4" fill="#dcd4d0"/><rect x="5" fill="#ece6e2"/><rect x="8" fill="#c0bcbc"/><rect x="9" fill="#fafbfb"/><rect x="10" fill="#e0d8cc"/><rect x="11" fill="#b4b4ae"/><rect x="12" fill="#d8d0cc"/></g>
              <g transform="translate(95,30)"><rect x="0" fill="#d4e6f4"/><rect x="1" fill="#f8f8f8"/><rect x="2" fill="#a89c90"/><rect x="4" fill="#544c48"/><rect x="5" fill="#dccec4"/><rect x="6" fill="#484c50"/><rect x="8" fill="#aac0d0"/><rect x="9" fill="#a88c70"/><rect x="10" fill="#d8c0b4"/><rect x="11" fill="#a0aab4"/><rect x="12" fill="#fdfdfb"/><rect x="13" fill="#b8c8dc"/></g>
              <g transform="translate(95,31)"><rect x="0" fill="#e8e4dc"/><rect x="1" fill="#fbfcfd"/><rect x="2" fill="#b4b8bc"/><rect x="3" fill="#b0b0b0"/><rect x="4" fill="#c4c8d4"/><rect x="5" fill="#fbfbfb"/><rect x="6" fill="#d0d8e4"/><rect x="7" fill="#646a80"/><rect x="8" fill="#d8e0ec"/><rect x="9" fill="#fdfcfa"/><rect x="10" fill="#d0d8e4"/><rect x="11" fill="#acaaa4"/><rect x="12" fill="#c8c8d0"/><rect x="13" fill="#f4ece6"/></g>
            </svg>
            <button class="btn-edit btn-edit-issuer">
              <svg class="ic" width="18" height="18" viewBox="0 0 1792 1792"><path fill="#333" d="M491 1536l91-91-235-235-91 91v107h128v128h107zm523-928q0-22-22-22-10 0-17 7l-542 542q-7 7-7 17 0 22 22 22 10 0 17-7l542-542q7-7 7-17zm-54-192l416 416-832 832h-416v-416zm683 96q0 53-37 90l-166 166-416-416 166-165q36-38 90-38 53 0 91 38l235 234q37 39 37 91z"/></svg>
              Edit Issuer
            </button>
          </div>
          <button class="btn-edit btn-edit-template">
            <svg class="ic" width="18" height="18" viewBox="0 0 1792 1792"><path fill="#333" d="M491 1536l91-91-235-235-91 91v107h128v128h107zm523-928q0-22-22-22-10 0-17 7l-542 542q-7 7-7 17 0 22 22 22 10 0 17-7l542-542q7-7 7-17zm-54-192l416 416-832 832h-416v-416zm683 96q0 53-37 90l-166 166-416-416 166-165q36-38 90-38 53 0 91 38l235 234q37 39 37 91z"/></svg>
            Edit Template
          </button>
        </div>
      </div>
    </section>
  </main>
</div>
<div class="callout callout-issuer"></div>
<div class="callout callout-template"></div>
</body>
</html>
```
FILE: styles.css
```css
* { box-sizing: border-box; }
html, body { height: 100%; }
body {
  margin: 0;
  padding-top: 2px;
  background: #fff;
  color: #333;
  font-family: "Liberation Sans", Arial, sans-serif;
  font-size: 20.150px;
  overflow: hidden;
}
.app {
  display: flex;
  height: 1252px;
  filter: blur(.3px);
}
.ic { flex: none; }

/* Sidebar */
.sidebar {
  width: 80px;
  flex: none;
  display: flex;
  flex-direction: column;
  background: #1e2f60;
}
.logo {
  height: 100px;
  display: flex;
  align-items: center;
  justify-content: center;
  padding: 3px 6px 0 0;
  background: #1f9dd9;
  border-bottom: 2px solid #3ba9de;
}
.side-nav { display: flex; flex-direction: column; }
.side-item {
  height: 71.300px;
  display: flex;
  align-items: center;
  justify-content: center;
  padding: 0 6px 3px 0;
}
.side-item.active { padding-bottom: 0; background: #17264f; }
.side-foot {
  margin-top: auto;
  display: flex;
  flex-direction: column;
}
.side-gear {
  height: 75px;
  display: flex;
  align-items: center;
  justify-content: center;
  padding-right: 6px;
  border-top: 2px solid #24376a;
  border-bottom: 2px solid #24376a;
}
.side-user {
  height: 71px;
  padding: 12px 0 0 14px;
}
.avatar { display: block; }

/* Main */
.main {
  flex: 1;
  min-width: 0;
  display: flex;
  flex-direction: column;
}
.topbar {
  height: 73px;
  flex: none;
  display: flex;
  align-items: center;
  padding: 0 26px 0 21px;
  background: #f8f8f8;
  border-bottom: 2px solid #e7e7e7;
  color: #777;
}
.brand { font-size: 25.600px; margin-right: 43px; }
.nav-link {
  display: inline-flex;
  align-items: center;
  gap: 5px;
  color: #777;
}
.topbar-right {
  margin-left: auto;
  display: flex;
  gap: 42px;
}
.content {
  padding: 13px 26px 0 21px;
}
.field-label {
  display: block;
  height: 34px;
  line-height: 28px;
  font-weight: 700;
}
.select {
  height: 47px;
  display: flex;
  align-items: center;
  justify-content: space-between;
  padding: 2px 24px 0 17px;
  border: 2px solid #ccc;
  border-radius: 6px;
  color: #333;
}
.caret {
  width: 0;
  height: 0;
  border-left: 7px solid transparent;
  border-right: 7px solid transparent;
  border-top: 7px solid #333;
  margin-top: -5px;
}
.btn-save {
  display: block;
  margin-top: 27px;
  width: 82px;
  height: 47px;
  padding: 3px 0 0;
  background: #428bca;
  border: 2px solid #3f86c4;
  border-radius: 6px;
  color: #fff;
  font: inherit;
  -webkit-text-stroke: .3px #fff;
}
.issuers {
  display: flex;
  margin-top: 14px;
  gap: 19px;
}
.issuer-list { width: 318px; flex: none; }
.btn-new {
  height: 58px;
  display: flex;
  align-items: center;
  justify-content: center;
  gap: 5px;
  padding: 2px 20px 0 0;
  border: 2px solid #ccc;
  border-left: 0;
  border-radius: 0 6px 6px 0;
  color: #333;
}
.issuer-link {
  display: block;
  margin-top: 19px;
  line-height: 28px;
  color: #428bca;
}
.issuer-pane {
  flex: 1;
  min-width: 0;
  display: flex;
  flex-direction: column;
}
.issuer-head {
  display: flex;
  justify-content: space-between;
  align-items: flex-start;
}
.mosaic {
  display: block;
  width: 973.400px;
  height: 348.300px;
  margin-top: 32px;
  shape-rendering: crispEdges;
  filter: blur(.5px);
}
.mosaic rect { width: 1px; height: 1px; }
.mosaic .pink-bg { width: 10.900px; height: 3.900px; }
.btn-edit {
  display: inline-flex;
  align-items: center;
  justify-content: center;
  gap: 5px;
  height: 47px;
  padding: 2px 0 0;
  background: #fff;
  border: 2px solid #ccc;
  border-radius: 6px;
  color: #333;
  font: inherit;
}
.btn-edit-issuer { width: 153px; margin-top: 29px; }
.btn-edit-template { width: 181px; margin-top: 21px; align-self: flex-end; }

/* Annotation overlays */
.callout {
  position: absolute;
  border: 10px solid #ff2d20;
  box-shadow: 0 2px 4px rgba(0,0,0,.35), inset 0 2px 4px rgba(0,0,0,.25);
}
.callout-issuer { left: 1918px; top: 253px; width: 191px; height: 113px; }
.callout-template { left: 1885px; top: 627px; width: 224px; height: 110px; }
```
